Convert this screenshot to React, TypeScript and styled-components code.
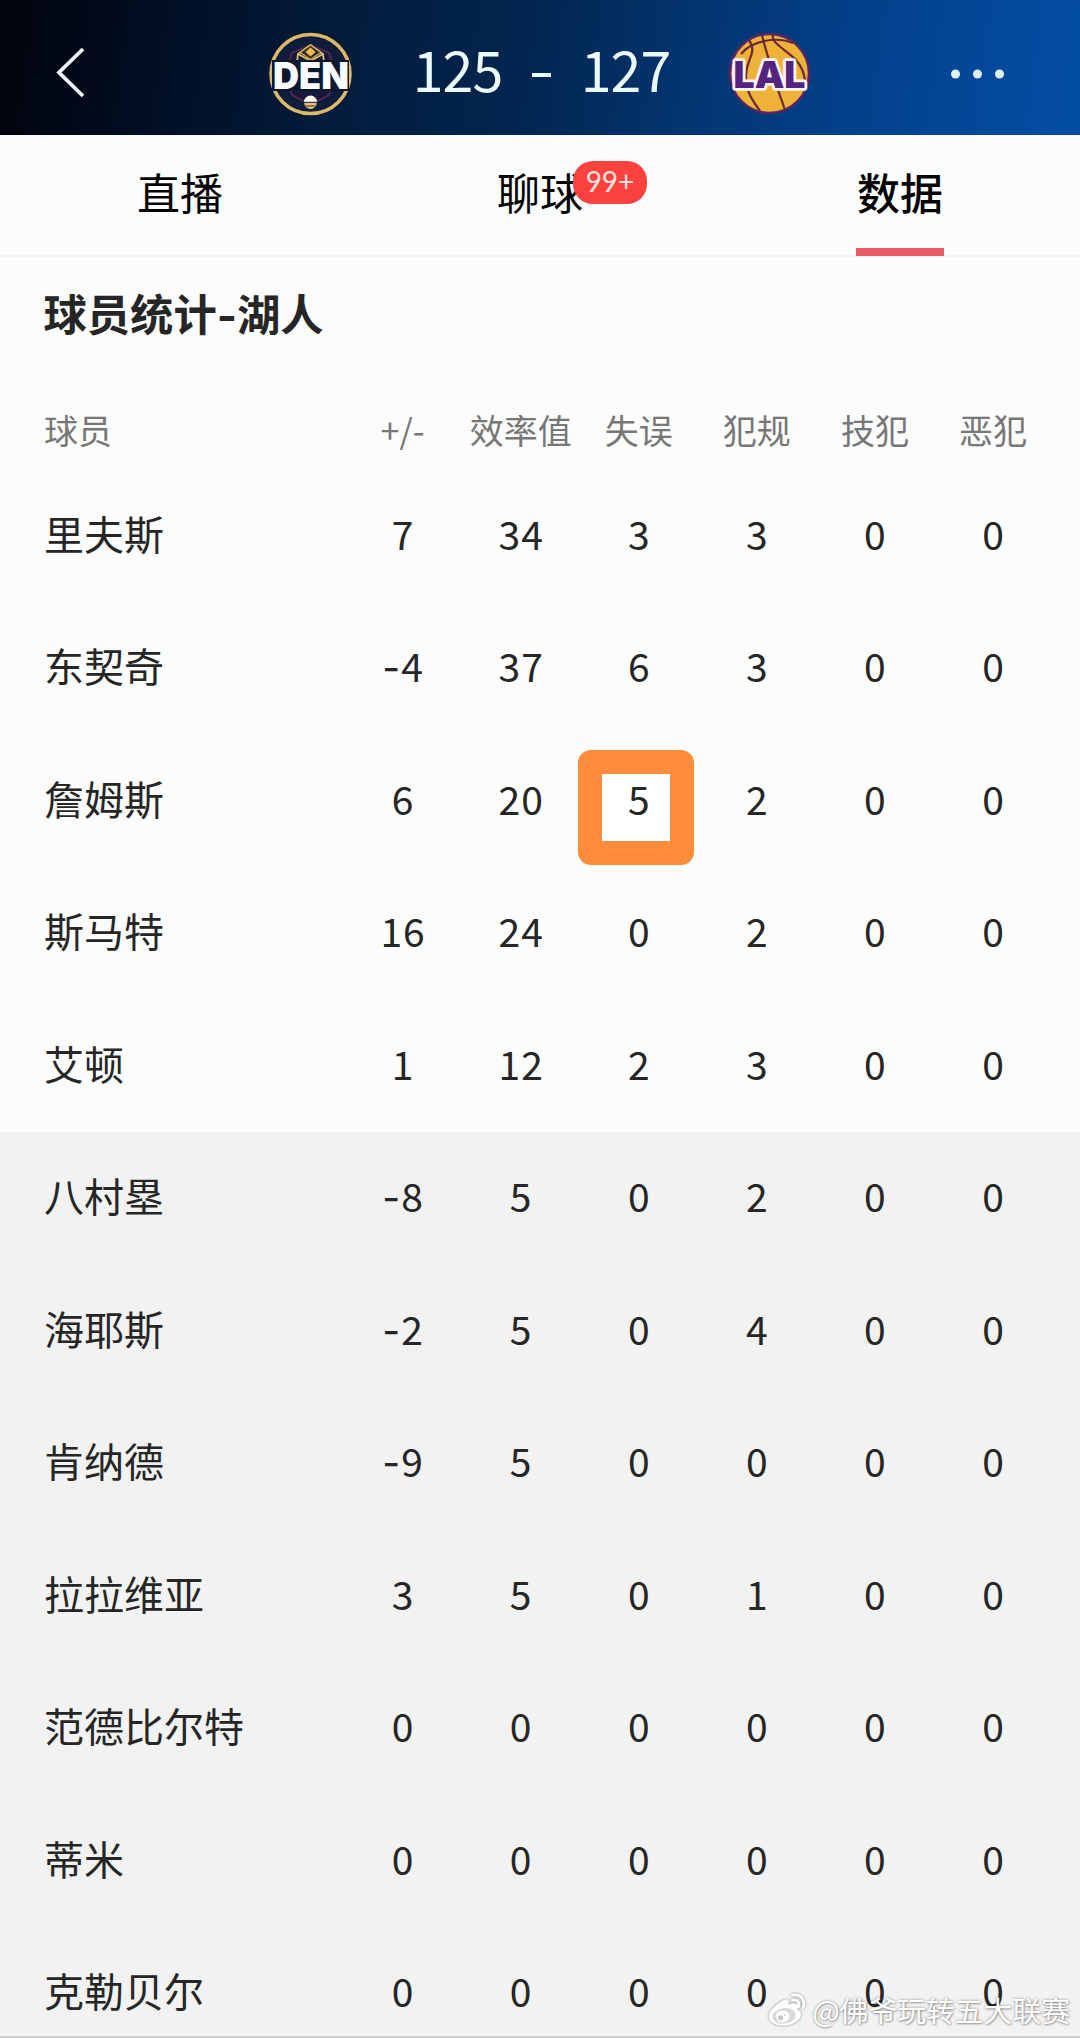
import React from "react";
import styled, { createGlobalStyle } from "styled-components";

const cjk = `"Noto Sans CJK SC", sans-serif`;
const latin = `Lato, "Noto Sans CJK SC", sans-serif`;

const GlobalStyle = createGlobalStyle`
  * { box-sizing: border-box; }
  body { margin: 0; background: #fcfcfc; font-family: ${cjk}; }
`;

const Page = styled.div`
  position: relative;
  display: flex;
  flex-direction: column;
  width: 1080px;
  height: 2038px;
  overflow: hidden;
  background: #fcfcfc;
  color: #262626;
`;

const TopBar = styled.header`
  flex: none;
  display: grid;
  grid-template-columns: 268px 86px 373px 86px 267px;
  align-items: center;
  height: 135px;
  padding-top: 13px;
  background: linear-gradient(98deg, #01040c 0%, #010d22 14%, #021b3a 30%, #02254f 48%, #033570 64%, #03408a 78%, #034ea4 100%);
`;

const BackButton = styled.button`
  display: flex;
  margin: 0 0 0 54px;
  padding: 0;
  border: 0;
  background: none;
  justify-self: start;
`;

const MoreButton = styled(BackButton)`
  margin-left: 137px;
`;

const Score = styled.div`
  display: grid;
  grid-template-columns: 94px 74px 94px;
  justify-content: center;
  align-items: center;
  height: 80px;
  font: 400 55.5px/80px ${cjk};
  letter-spacing: -1px;
  color: #eafaff;
  text-align: center;
  margin: -12px 0 0 2px;
`;

const Dash = styled.span`
  width: 19px;
  height: 4px;
  margin: 14px auto 0;
  background: #eafaff;
`;

const Tabs = styled.nav`
  flex: none;
  display: grid;
  grid-template-columns: repeat(3, 1fr);
  height: 122px;
  border-bottom: 2px solid #f1f3f3;
  background: linear-gradient(#f8fafb, #fbfcfc 40%);
`;

const Tab = styled.div<{ $active?: boolean }>`
  display: flex;
  flex-direction: column;
  align-items: center;
  justify-content: space-between;
  padding-top: 25px;
  font-size: 43px;
  line-height: 62px;
  font-weight: ${(p) => (p.$active ? 500 : 400)};
  color: #050505;
`;

const TabLabel = styled.span`
  position: relative;
`;

const Underline = styled.span`
  width: 88px;
  height: 8px;
  margin-bottom: -1px;
  background: #e75c64;
`;

const Badge = styled.span`
  position: absolute;
  left: 76px;
  top: 1px;
  width: 74px;
  height: 43px;
  border-radius: 20px;
  background: #fb423e;
  color: #ffe3df;
  font: 400 28px/41px ${latin};
  text-align: center;
`;

const Title = styled.h2`
  flex: none;
  margin: 0;
  height: 118px;
  padding: 24px 43.5px 0;
  font-size: 43.3px;
  line-height: 62px;
  font-weight: 700;
`;

const Hyphen = styled.span`
  font-family: Inter, sans-serif;
  line-height: 1;
`;

const Line = styled.div`
  flex: none;
  display: grid;
  grid-template-columns: 299.5px repeat(6, 118.1px);
  padding-left: 44px;
  align-items: center;
`;

const HeadLine = styled(Line)`
  height: 94px;
  padding-top: 14px;
  font-size: 34px;
  color: #777;
`;

const HeadCell = styled.span<{ $first?: boolean }>`
  text-align: ${(p) => (p.$first ? "left" : "center")};
  white-space: nowrap;
`;

const PlayerLine = styled(Line)<{ $bench: boolean }>`
  height: 132.5px;
  background: ${(p) => (p.$bench ? "#f2f2f2" : "transparent")};
`;

const Name = styled.span`
  padding-bottom: 5px;
  font-size: 40px;
  line-height: 58px;
`;

const Stat = styled.span`
  position: relative;
  padding: 0 0 5px 1px;
  font-size: 39px;
  line-height: 58px;
  letter-spacing: 1px;
  text-align: center;
`;

const Digits = styled.span`
  position: relative;
`;

const Marker = styled.span`
  position: absolute;
  left: -2px;
  top: -19px;
  width: 116px;
  height: 115px;
  border: 24.5px solid #ff8c38;
  border-radius: 13px;
  background: #fff;
`;

const Watermark = styled.div`
  position: absolute;
  right: 10px;
  bottom: 9px;
  display: flex;
  align-items: center;
  gap: 6px;
  font-size: 28.8px;
  line-height: 38px;
  color: #fff;
  text-shadow: 0 0 3px rgba(0, 0, 0, 0.4), 1px 1px 2px rgba(0, 0, 0, 0.25);
`;

const BottomRule = styled.div`
  position: absolute;
  left: 0;
  right: 0;
  bottom: 0;
  height: 2px;
  background: #cfcfcf;
`;

const Logo = styled.svg`
  display: block;
  overflow: visible;
`;

const WeiboLogo = styled(Logo)`
  filter: drop-shadow(0 0 1px rgba(0, 0, 0, 0.5));
`;

const LogoText = styled.text`
  font-family: Inter, sans-serif;
  font-weight: 900;
  font-size: 37px;
`;

const DenLogo = () => (
  <Logo width="86" height="86" viewBox="0 0 86 86">
    <circle cx="42.5" cy="43" r="42" fill="#111a2a" />
    <circle cx="42.5" cy="43" r="39.5" fill="#0e1d3c" stroke="#dab96b" strokeWidth="3.5" />
    <path d="M42.5 14 L61 22 L68 43 L61 64 L42.5 74 L24 64 L17 43 L24 22Z" fill="#17193a" stroke="#57284f" strokeWidth="1.8" />
    <path d="M29 31 L30 23 L42.5 14 L55 23 L56 31 M30 23 L42.5 30 L55 23" fill="none" stroke="#d8bf76" strokeWidth="1.8" />
    <path d="M32 21.5 L42.5 14 L53 21.5 L42.5 28.5Z" fill="#392b20" stroke="#d8b45c" strokeWidth="1.2" />
    <path d="M42.5 16.5 L47.5 21 L42.5 25.5 L37.5 21Z" fill="#efbd4f" />
    <circle cx="42.5" cy="71.5" r="6.4" fill="#e7c069" />
    <path d="M36.1 71 A6.4 6.4 0 0 1 48.9 71Z" fill="#fff" />
    <path d="M36 71.3H49M37.5 75H47.5" stroke="#40305a" strokeWidth="1.2" fill="none" />
    <path d="M4 29H81V60H4Z" fill="#0c1830" />
    <LogoText x="5" y="57.5" textLength="76" lengthAdjust="spacingAndGlyphs" fill="#f8fbff">DEN</LogoText>
  </Logo>
);

const LalLogo = () => (
  <Logo width="86" height="86" viewBox="0 0 86 86">
    <circle cx="42.5" cy="42.5" r="39.5" fill="#efb238" stroke="#5b2560" strokeWidth="2.5" />
    <g fill="none" stroke="#682938" strokeWidth="2.2">
      <path d="M14 23 C24 10 49 5 66 12" />
      <path d="M22 9 C31 22 19 27 19 46 C19 61 26 70 33 80" />
      <path d="M35 4 C39 22 45 36 49 53 L58 79" />
      <path d="M46 3 C43 12 60 19 69 29 C75 36 77 41 78 49" />
    </g>
    <LogoText
      x="6.5" y="57" textLength="72" lengthAdjust="spacingAndGlyphs"
      fill="#53257f" stroke="#fff4fa" strokeWidth="5.5" strokeLinejoin="round" paintOrder="stroke"
    >LAL</LogoText>
  </Logo>
);

const WeiboMark = () => (
  <WeiboLogo width="39" height="35" viewBox="0 0 40 36">
    <path d="M16 8 C19 5 24 6 22 12 C29 9 34 11 31 17 C36 19 36 24 32 28 C26 34 12 36 5 30 C-3 24 5 14 16 8Z" fill="#fff" />
    <ellipse cx="17.5" cy="23.5" rx="12" ry="8" transform="rotate(-8 17.5 23.5)" fill="#d9d9d9" />
    <ellipse cx="16" cy="24" rx="7" ry="6" fill="#fff" />
    <circle cx="14" cy="25.5" r="2.6" fill="#c4c4c4" />
    <circle cx="18" cy="22.6" r="1" fill="#c4c4c4" />
    <path d="M26 2 C34 0 40 7 37 15 M26.5 7.5 C31 6.5 34 10 32.5 14" fill="none" stroke="#fff" strokeWidth="2.8" strokeLinecap="round" />
  </WeiboLogo>
);

const columns = ["球员", "+/-", "效率值", "失误", "犯规", "技犯", "恶犯"];

const players: { name: string; stats: number[]; marked?: number }[] = [
  { name: "里夫斯", stats: [7, 34, 3, 3, 0, 0] },
  { name: "东契奇", stats: [-4, 37, 6, 3, 0, 0] },
  { name: "詹姆斯", stats: [6, 20, 5, 2, 0, 0], marked: 2 },
  { name: "斯马特", stats: [16, 24, 0, 2, 0, 0] },
  { name: "艾顿", stats: [1, 12, 2, 3, 0, 0] },
  { name: "八村塁", stats: [-8, 5, 0, 2, 0, 0] },
  { name: "海耶斯", stats: [-2, 5, 0, 4, 0, 0] },
  { name: "肯纳德", stats: [-9, 5, 0, 0, 0, 0] },
  { name: "拉拉维亚", stats: [3, 5, 0, 1, 0, 0] },
  { name: "范德比尔特", stats: [0, 0, 0, 0, 0, 0] },
  { name: "蒂米", stats: [0, 0, 0, 0, 0, 0] },
  { name: "克勒贝尔", stats: [0, 0, 0, 0, 0, 0] },
];

const STARTERS = 5;

export default function App() {
  return (
    <Page>
      <GlobalStyle />
      <TopBar>
        <BackButton aria-label="返回">
          <svg width="34" height="56" viewBox="0 0 34 56">
            <path d="M29 3 L5 26.5 L29 50" fill="none" stroke="#eef3fa" strokeWidth="3.8" />
          </svg>
        </BackButton>
        <DenLogo />
        <Score>
          <span>125</span>
          <Dash />
          <span>127</span>
        </Score>
        <LalLogo />
        <MoreButton aria-label="更多">
          <svg width="56" height="12" viewBox="0 0 56 12">
            <circle cx="5.5" cy="6" r="4.5" fill="#dff3ff" />
            <circle cx="27.5" cy="6" r="4.5" fill="#dff3ff" />
            <circle cx="49.5" cy="6" r="4.5" fill="#dff3ff" />
          </svg>
        </MoreButton>
      </TopBar>
      <Tabs>
        <Tab><TabLabel>直播</TabLabel></Tab>
        <Tab><TabLabel>聊球<Badge>99+</Badge></TabLabel></Tab>
        <Tab $active><TabLabel>数据</TabLabel><Underline /></Tab>
      </Tabs>
      <Title>球员统计<Hyphen>-</Hyphen>湖人</Title>
      <HeadLine>
        {columns.map((c, i) => <HeadCell key={c} $first={i === 0}>{c}</HeadCell>)}
      </HeadLine>
      {players.map((p, row) => (
        <PlayerLine key={p.name} $bench={row >= STARTERS}>
          <Name>{p.name}</Name>
          {p.stats.map((v, i) => (
            <Stat key={i}>
              {p.marked === i && <Marker />}
              <Digits>{v < 0 && <Hyphen>-</Hyphen>}{Math.abs(v)}</Digits>
            </Stat>
          ))}
        </PlayerLine>
      ))}
      <BottomRule />
      <Watermark>
        <WeiboMark />
        <span>@佛爷玩转五大联赛</span>
      </Watermark>
    </Page>
  );
}
